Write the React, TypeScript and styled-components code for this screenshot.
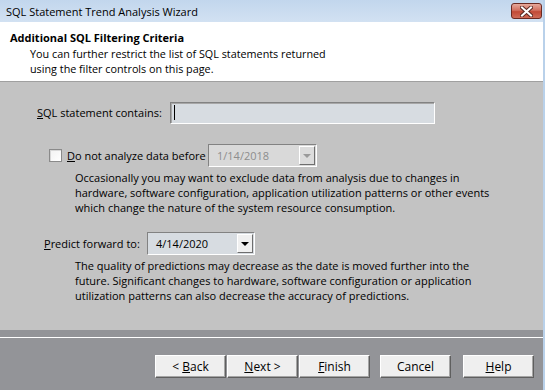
import React from 'react';
import styled, { createGlobalStyle } from 'styled-components';

const GlobalStyle = createGlobalStyle`
  html, body {
    margin: 0;
    padding: 0;
    width: 545px;
    height: 390px;
    overflow: hidden;
  }
  body {
    font-family: "Open Sans", "Noto Sans", sans-serif;
    font-size: 11px;
    color: #000;
  }
`;

// Window frame
const Window = styled.div`
  width: 545px;
  height: 390px;
  display: flex;
  flex-direction: column;
  box-sizing: border-box;
  border-right: 2px solid #b9d1ea;
  background: #c3c3c3;
`;

const TitleBar = styled.div`
  height: 22px;
  flex: none;
  display: flex;
  align-items: center;
  justify-content: space-between;
  padding: 0 1px 0 6px;
  background: linear-gradient(#c2d6ed, #d2e1f2);
  font-size: 11px;
`;

const CloseButton = styled.div`
  width: 29px;
  height: 14px;
  border: 1px solid #6b2a22;
  border-radius: 3px;
  background: linear-gradient(#e6a99b 0%, #d2705f 45%, #c24a36 55%, #cf6b58 100%);
  display: flex;
  align-items: center;
  justify-content: center;
`;

// Header area
const Header = styled.div`
  height: 60px;
  flex: none;
  background: #ffffff;
  border-bottom: 1px solid #a0a0a0;
  padding: 8px 0 0 10px;
  box-sizing: border-box;
`;

const HeaderTitle = styled.div`
  font-weight: bold;
  line-height: 16px;
`;

const HeaderText = styled.div`
  padding-left: 20px;
  line-height: 15px;
  font-size: 10.8px;
`;

// Main content
const Content = styled.div`
  flex: 1;
  display: flex;
  flex-direction: column;
  background: #c3c3c3;
`;

const Row = styled.div<{ $top: number; $left: number }>`
  display: flex;
  align-items: center;
  margin-top: ${(p) => p.$top}px;
  padding-left: ${(p) => p.$left}px;
  height: 23px;
`;

const Label = styled.span<{ $width: number }>`
  width: ${(p) => p.$width}px;
  flex: none;
`;

const TextInput = styled.div`
  width: 265px;
  height: 22px;
  box-sizing: border-box;
  background: #d7dce1;
  border: 1px solid;
  border-color: #828282 #ffffff #ffffff #828282;
  box-shadow: inset 1px 1px 0 #a7a7a7;
  display: flex;
  align-items: center;
  padding-left: 3px;
`;

const Caret = styled.span`
  width: 1px;
  height: 15px;
  background: #000;
`;

const CheckBox = styled.span`
  width: 13px;
  height: 13px;
  box-sizing: border-box;
  border: 1px solid #8a8a8a;
  background: linear-gradient(135deg, #f2f2f2, #ffffff);
  box-shadow: inset 1px 1px 0 #d8d8d8;
  margin-right: 5px;
  flex: none;
`;

const Combo = styled.div<{ $width: number; $disabled?: boolean }>`
  width: ${(p) => p.$width}px;
  height: 23px;
  box-sizing: border-box;
  border: 1px solid;
  border-color: #828282 #ffffff #ffffff #828282;
  background: ${(p) => (p.$disabled ? '#d9d9d9' : '#d7dce1')};
  color: ${(p) => (p.$disabled ? '#8d8d8d' : '#000')};
  display: flex;
  align-items: center;
  justify-content: space-between;
  padding: 1px 1px 1px 8px;
  flex: none;
`;

const DropButton = styled.span<{ $disabled?: boolean }>`
  width: 16px;
  height: 19px;
  box-sizing: border-box;
  border: 1px solid;
  border-color: #ffffff #6e6e6e #6e6e6e #ffffff;
  background: ${(p) => (p.$disabled ? '#dcdcdc' : '#f0f0f0')};
  display: flex;
  align-items: center;
  justify-content: center;
`;

const Arrow = styled.span<{ $disabled?: boolean }>`
  width: 0;
  height: 0;
  border-left: 4px solid transparent;
  border-right: 4px solid transparent;
  border-top: 4px solid ${(p) => (p.$disabled ? '#9a9a9a' : '#000')};
`;

const Paragraph = styled.div<{ $top: number }>`
  margin-top: ${(p) => p.$top}px;
  padding-left: 75px;
  padding-right: 40px;
  line-height: 15px;
`;

// Footer
const Footer = styled.div`
  height: 60px;
  flex: none;
  background: #939498;
  padding-top: 7px;
  box-sizing: border-box;
`;

const FooterRule = styled.div`
  height: 1px;
  background: #ffffff;
`;

const ButtonRow = styled.div`
  display: flex;
  padding: 17px 0 0 155px;
`;

const Button = styled.div<{ $gap: number }>`
  width: 71px;
  height: 23px;
  box-sizing: border-box;
  margin-left: ${(p) => p.$gap}px;
  background: #efefef;
  border: 1px solid;
  border-color: #ffffff #5f5f5f #5f5f5f #ffffff;
  box-shadow: inset -1px -1px 0 #a5a5a5;
  display: flex;
  align-items: center;
  justify-content: center;
  font-size: 12px;
`;

const App: React.FC = () => {
  return (
    <>
      <GlobalStyle />
      <Window>
        <TitleBar>
          <span>SQL Statement Trend Analysis Wizard</span>
          <CloseButton>
            <svg width="13" height="11" viewBox="0 0 13 11">
              <path d="M2 1.5 L11 9.5 M11 1.5 L2 9.5" stroke="#5a2a24" strokeWidth="4" strokeLinecap="square" />
              <path d="M2 1.5 L11 9.5 M11 1.5 L2 9.5" stroke="#ffffff" strokeWidth="2" strokeLinecap="square" />
            </svg>
          </CloseButton>
        </TitleBar>

        <Header>
          <HeaderTitle>Additional SQL Filtering Criteria</HeaderTitle>
          <HeaderText>
            You can further restrict the list of SQL statements returned
            <br />
            using the filter controls on this page.
          </HeaderText>
        </Header>

        <Content>
          <Row $top={19} $left={37}>
            <Label $width={133}>
              <u>S</u>QL statement contains:
            </Label>
            <TextInput>
              <Caret />
            </TextInput>
          </Row>

          <Row $top={20} $left={49}>
            <CheckBox />
            <Label $width={141}>
              <u>D</u>o not analyze data before
            </Label>
            <Combo $width={109} $disabled>
              <span>1/14/2018</span>
              <DropButton $disabled>
                <Arrow $disabled />
              </DropButton>
            </Combo>
          </Row>

          <Paragraph $top={3}>
            Occasionally you may want to exclude data from analysis due to changes in
            hardware, software configuration, application utilization patterns or other events
            which change the nature of the system resource consumption.
          </Paragraph>

          <Row $top={17} $left={44}>
            <Label $width={103}>
              <u>P</u>redict forward to:
            </Label>
            <Combo $width={108}>
              <span>4/14/2020</span>
              <DropButton>
                <Arrow />
              </DropButton>
            </Combo>
          </Row>

          <Paragraph $top={3}>
            The quality of predictions may decrease as the date is moved further into the
            future. Significant changes to hardware, software configuration or application
            utilization patterns can also decrease the accuracy of predictions.
          </Paragraph>
        </Content>

        <Footer>
          <FooterRule />
          <ButtonRow>
            <Button $gap={0}>
              &lt;&nbsp;<u>B</u>ack
            </Button>
            <Button $gap={1}>
              <u>N</u>ext&nbsp;&gt;
            </Button>
            <Button $gap={1}>
              <u>F</u>inish
            </Button>
            <Button $gap={10}>Cancel</Button>
            <Button $gap={12}>
              <u>H</u>elp
            </Button>
          </ButtonRow>
        </Footer>
      </Window>
    </>
  );
};

export default App;
